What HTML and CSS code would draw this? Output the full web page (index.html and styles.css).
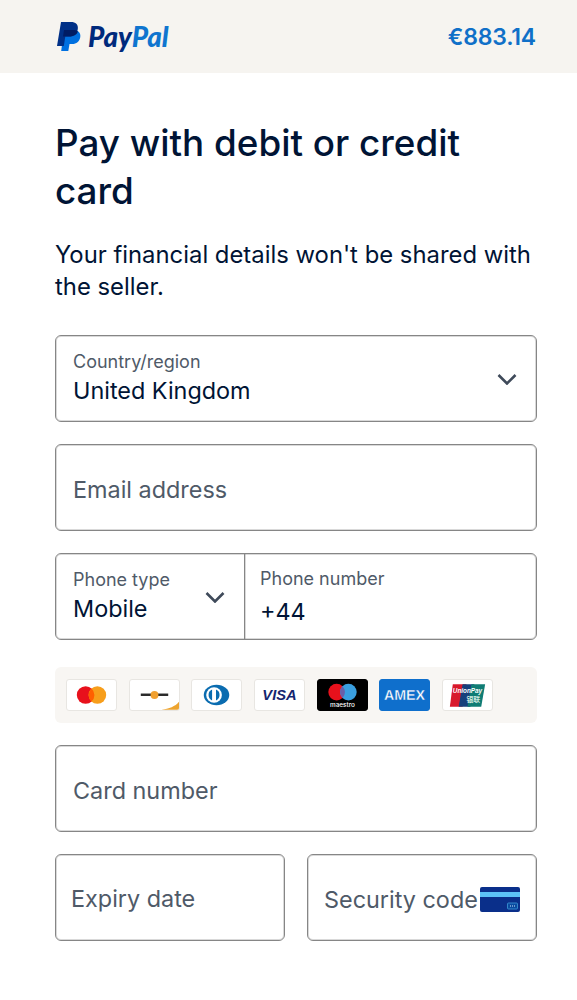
FILE: index.html
```html
<!DOCTYPE html>
<html lang="en">
<head>
<meta charset="utf-8">
<title>Pay with debit or credit card</title>
<link rel="stylesheet" href="styles.css">
</head>
<body>
<header class="topbar">
  <div class="logo">
    <svg class="logo-mark" viewBox="0 0 25 29" width="25" height="29">
      <path fill="#0070e0" d="M8 8h9.500c4 0 7.500 2.300 6.800 7-.7 4.600-4 7-8 7h-2.800l-1.200 7H5.200z"/>
      <path fill="#003087" d="M5 0h10c4.500 0 7.500 2.500 6.800 7-.7 5-4.500 7.500-9 7.500H9.300L7.800 24H1z"/>
      <path fill="#001c64" d="M8 8h9.500c2 0 3.500.5 4.300 1.500C21 13 17.500 14.500 12.800 14.500H7z"/>
    </svg>
    <span class="wordmark"><span class="pay">Pay</span><span class="pal">Pal</span></span>
  </div>
  <div class="amount">€883.14</div>
</header>
<main class="content">
  <h1 class="title">Pay with debit or credit card</h1>
  <p class="subtitle">Your financial details won't be shared with the seller.</p>
  <form class="form">
    <div class="field field-select">
      <div class="stack">
        <span class="label">Country/region</span>
        <span class="value">United Kingdom</span>
      </div>
      <svg class="chevron" viewBox="0 0 20 12" width="20" height="12"><path d="M1.500 2l8.500 8.500L18.500 2" fill="none" stroke="#3f4a5a" stroke-width="2.600"/></svg>
    </div>
    <div class="field field-text"><span class="placeholder">Email address</span></div>
    <div class="phone">
      <div class="phone-type">
        <div class="stack">
          <span class="label">Phone type</span>
          <span class="value">Mobile</span>
        </div>
        <svg class="chevron" viewBox="0 0 20 12" width="20" height="12"><path d="M1.500 2l8.500 8.500L18.500 2" fill="none" stroke="#3f4a5a" stroke-width="2.600"/></svg>
      </div>
      <div class="phone-number">
        <span class="label">Phone number</span>
        <span class="value value-num">+44</span>
      </div>
    </div>
    <div class="cards">
      <div class="card">
        <svg viewBox="0 0 50 30" width="50" height="30"><circle cx="19" cy="15" r="9" fill="#e8111c"/><circle cx="31" cy="15" r="9" fill="#f79e1b"/><path d="M25 8.300a9 9 0 0 1 0 13.400a9 9 0 0 1 0-13.400z" fill="#ff5f00"/></svg>
      </div>
      <div class="card">
        <svg viewBox="0 0 50 30" width="50" height="30"><rect x="11" y="13.500" width="28" height="2.500" fill="#2a2a2a"/><circle cx="25" cy="15" r="4" fill="#f0a030"/><path d="M32 30c8-1 14-3 18-8v8z" fill="#eda42f"/></svg>
      </div>
      <div class="card">
        <svg viewBox="0 0 50 30" width="50" height="30"><ellipse cx="25" cy="15" rx="13" ry="10.500" fill="#0a6cb0"/><circle cx="22.500" cy="15" r="8" fill="#fff"/><path d="M20.500 9.500v11a6 6 0 0 1 0-11zM24.500 9.500a6 6 0 0 1 0 11z" fill="#0a6cb0"/></svg>
      </div>
      <div class="card">
        <svg viewBox="0 0 50 30" width="50" height="30"><text x="25" y="20.500" class="visa-text" text-anchor="middle">VISA</text></svg>
      </div>
      <div class="card card-maestro">
        <svg viewBox="0 0 50 30" width="50" height="30"><circle cx="19" cy="12" r="8.500" fill="#e8111c"/><circle cx="31" cy="12" r="8.500" fill="#3a9fe0"/><path d="M25 6a8.500 8.500 0 0 1 0 12a8.500 8.500 0 0 1 0-12z" fill="#6a5fa8"/><text x="25" y="27.500" class="maestro-text" text-anchor="middle">maestro</text></svg>
      </div>
      <div class="card card-amex">
        <svg viewBox="0 0 50 30" width="50" height="30"><text x="25" y="20" class="amex-text" text-anchor="middle" textLength="42" lengthAdjust="spacingAndGlyphs">AMEX</text></svg>
      </div>
      <div class="card">
        <svg viewBox="0 0 50 30" width="50" height="30"><path d="M10 4h14l-4 23H7z" fill="#d8182c"/><path d="M20 4h12l-4 23H16z" fill="#17407c"/><path d="M29 4h14l-4 23H25z" fill="#0f7c74"/><text x="25" y="13" class="up-text" text-anchor="middle">UnionPay</text><text x="31" y="22" class="up-cjk" text-anchor="middle">银联</text></svg>
      </div>
    </div>
    <div class="field field-text"><span class="placeholder">Card number</span></div>
    <div class="row">
      <div class="field field-expiry"><span class="placeholder">Expiry date</span></div>
      <div class="field field-text field-cvv">
        <span class="placeholder">Security code</span>
        <svg viewBox="0 0 40 25" width="40" height="25"><rect width="40" height="25" rx="2" fill="#0a2f8a"/><rect y="5" width="40" height="5" fill="#5cc2f7"/><rect x="27.500" y="16" width="10" height="6" rx="1" fill="#0a4aa0" stroke="#3d9ad8" stroke-width=".8"/><path d="M30 19h5" stroke="#cfe8fa" stroke-width="1" stroke-dasharray="1 1"/></svg>
      </div>
    </div>
  </form>
</main>
</body>
</html>
```
FILE: styles.css
```css
* { box-sizing: border-box; }
html, body { margin: 0; padding: 0; background: #fff; }
body {
  font-family: Inter, "Liberation Sans", sans-serif;
  color: #001435;
}
.topbar {
  height: 73px;
  background: #f6f4f0;
  padding: 0 41px 0 56px;
  display: flex;
  align-items: center;
  justify-content: space-between;
}
.logo { display: flex; align-items: center; gap: 7px; }
.logo-mark { display: block; margin-top: -1px; }
.wordmark {
  font-family: Lato, "Liberation Sans", sans-serif;
  font-style: italic;
  font-weight: 900;
  font-size: 27.800px;
  line-height: 32px;
}
.pay { color: #002a7c; }
.pal { color: #0f75cf; }
.amount {
  font-size: 23px;
  font-weight: 600;
  color: #1070c8;
  letter-spacing: -0.2px;
}
.content { padding: 46px 40px 0 55px; }
.title {
  margin: 0;
  font-size: 36.800px;
  line-height: 48px;
  font-weight: 500;
  color: #001435;
}
.subtitle {
  margin: 24px 0 0;
  font-size: 23.850px;
  line-height: 32px;
  font-weight: 400;
}
.form { margin-top: 32px; display: flex; flex-direction: column; gap: 22px; }
.field, .phone {
  height: 87px;
  border: 1px solid #868686;
  border-radius: 6px;
  box-shadow: inset 0 0 0 1px rgba(130, 130, 130, 0.3);
}
.field {
  padding: 0 17px;
  display: flex;
  align-items: center;
}
.field-text { padding-top: 4px; }
.field-select { justify-content: space-between; padding-right: 19px; }
.stack { display: flex; flex-direction: column; }
.stack .value { margin-top: 1px; }
.label { font-size: 18px; line-height: 24px; color: #4f5a68; }
.value { font-size: 23.400px; line-height: 32px; color: #001435; }
.placeholder { font-size: 23.400px; color: #4f5a68; white-space: nowrap; }
.phone { display: flex; }
.phone-type {
  width: 189px;
  padding: 0 19px 0 17px;
  display: flex;
  align-items: center;
  justify-content: space-between;
  border-right: 1px solid #868686;
  box-shadow: 1px 0 0 rgba(130, 130, 130, 0.3);
}
.phone-number {
  flex: 1;
  padding: 13px 15px 0;
  display: flex;
  flex-direction: column;
}
.value-num { margin-top: 5px; }
.cards {
  height: 56px;
  margin-top: 5px;
  background: #f8f6f3;
  border-radius: 6px;
  padding: 0 11px;
  display: flex;
  align-items: center;
  gap: 11.700px;
}
.card {
  width: 51px;
  height: 32px;
  background: #fff;
  border: 1px solid #e8e6e2;
  border-radius: 3px;
  overflow: hidden;
  display: flex;
  align-items: center;
  justify-content: center;
  flex: none;
}
.card svg { display: block; }
.card-maestro { background: #000; border-color: #000; }
.card-amex { background: #0f6fcc; border-color: #0f6fcc; }
.visa-text { font: italic 700 15px "Liberation Sans", sans-serif; fill: #14256f; }
.maestro-text { font: 500 6.500px Inter, sans-serif; fill: #fff; }
.amex-text { font: 900 14.500px "Liberation Sans", sans-serif; fill: #fff; stroke: #0f6fcc; stroke-width: .4px; }
.up-text { font: italic 700 6.500px "Liberation Sans", sans-serif; fill: #fff; }
.up-cjk { font: 700 7px "Noto Sans CJK SC", sans-serif; fill: #cfe8e0; }
.row { display: flex; justify-content: space-between; }
.field-expiry { width: 230px; padding: 2px 15px 0; }
.field-cvv { width: 230px; justify-content: space-between; padding-left: 16px; padding-right: 16px; }
```
